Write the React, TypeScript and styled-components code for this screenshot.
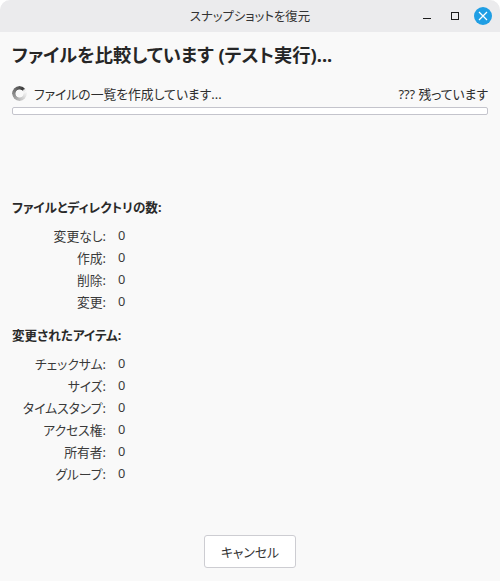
import React from "react";
import styled, { createGlobalStyle } from "styled-components";

const Global = createGlobalStyle`
  html, body { margin: 0; padding: 0; background: #ffffff; height: 100%; overflow: hidden; }
  #root { height: 100%; }
  * { box-sizing: border-box; }
`;

const Window = styled.div`
  width: 500px;
  height: 581px;
  display: flex;
  flex-direction: column;
  background: #f9f9f9;
  border-radius: 10px 10px 0 0;
  overflow: hidden;
  color: #2e2e2e;
  font-family: "Noto Sans", "Noto Sans CJK JP", sans-serif;
  font-feature-settings: "palt", "kern";
  font-size: 12.8px;
`;

const TitleBar = styled.header`
  position: relative;
  flex: 0 0 32px;
  height: 32px;
  display: flex;
  align-items: center;
  justify-content: center;
  background: #ebebed;
  font-size: 12.4px;
  color: #333333;
`;

const Controls = styled.div`
  position: absolute;
  right: 8px;
  top: 7px;
  display: flex;
  align-items: center;
  gap: 10px;
`;

const Control = styled.button<{ $close?: boolean }>`
  width: 18px;
  height: 18px;
  padding: 0;
  border: 0;
  border-radius: 50%;
  display: flex;
  align-items: center;
  justify-content: center;
  background: ${(p) => (p.$close ? "#1f9ee4" : "transparent")};
  color: ${(p) => (p.$close ? "#ffffff" : "#1c1c1c")};
`;

const Body = styled.main`
  flex: 1;
  display: flex;
  flex-direction: column;
  padding: 10px 12px 13px;
`;

const Heading = styled.h1`
  margin: 0;
  font-size: 18.3px;
  line-height: 26px;
  font-weight: 700;
  color: #262626;
`;

const StatusRow = styled.div`
  margin-top: 14px;
  height: 22px;
  display: flex;
  align-items: center;
  justify-content: space-between;
`;

const StatusLeft = styled.div`
  display: flex;
  align-items: center;
  gap: 7px;
`;

const Spinner = styled.div`
  width: 15px;
  height: 15px;
  border-radius: 50%;
  background: conic-gradient(from 70deg, rgba(60, 60, 60, 0) 0deg, rgba(110, 110, 110, 0.35) 90deg, #3a3a3a 330deg, rgba(60, 60, 60, 0.05) 345deg);
  -webkit-mask: radial-gradient(circle, transparent 3.6px, #000 4.4px);
  mask: radial-gradient(circle, transparent 3.6px, #000 4.4px);
`;

const Progress = styled.div`
  margin-top: 3px;
  height: 8px;
  border: 1px solid #c4c4cc;
  border-radius: 2px;
  background: #ffffff;
`;

const SectionTitle = styled.h2<{ $top: number }>`
  margin: ${(p) => p.$top}px 0 0;
  font-size: 12.6px;
  line-height: 20px;
  font-weight: 700;
  color: #2a2a2a;
`;

const StatsGrid = styled.dl`
  margin: 6px 0 0;
  display: grid;
  grid-template-columns: 94px auto;
  justify-content: start;
  column-gap: 12px;
  grid-auto-rows: 22px;
  align-items: center;
`;

const StatLabel = styled.dt`
  text-align: right;
  white-space: nowrap;
  color: #3a3a3a;
`;

const StatValue = styled.dd`
  margin: 0;
  color: #3a3a3a;
`;

const Footer = styled.footer`
  margin-top: auto;
  display: flex;
  justify-content: center;
`;

const CancelButton = styled.button`
  width: 92px;
  height: 33px;
  border: 1px solid #cdcdd2;
  border-radius: 3px;
  background: #ffffff;
  font: inherit;
  font-feature-settings: inherit;
  color: #333333;
`;

const groups = {
  counts: ["変更なし:", "作成:", "削除:", "変更:"],
  items: ["チェックサム:", "サイズ:", "タイムスタンプ:", "アクセス権:", "所有者:", "グループ:"],
};

const Stats = ({ labels }: { labels: string[] }) => (
  <StatsGrid>
    {labels.map((label) => (
      <React.Fragment key={label}>
        <StatLabel>{label}</StatLabel>
        <StatValue>0</StatValue>
      </React.Fragment>
    ))}
  </StatsGrid>
);

export default function App() {
  return (
    <>
      <Global />
      <Window>
        <TitleBar>
          スナップショットを復元
          <Controls>
            <Control aria-label="minimize">
              <svg width="10" height="10" viewBox="0 0 10 10">
                <path d="M1 7.5h8" stroke="currentColor" strokeWidth="1" fill="none" />
              </svg>
            </Control>
            <Control aria-label="maximize">
              <svg width="10" height="10" viewBox="0 0 10 10">
                <rect x="1.5" y="1.5" width="7" height="7" stroke="currentColor" strokeWidth="1" fill="none" />
              </svg>
            </Control>
            <Control $close aria-label="close">
              <svg width="10" height="10" viewBox="0 0 10 10">
                <path d="M1 1l8 8M9 1l-8 8" stroke="currentColor" strokeWidth="1.2" fill="none" />
              </svg>
            </Control>
          </Controls>
        </TitleBar>
        <Body>
          <Heading>ファイルを比較しています (テスト実行)...</Heading>
          <StatusRow>
            <StatusLeft>
              <Spinner />
              <span>ファイルの一覧を作成しています...</span>
            </StatusLeft>
            <span>??? 残っています</span>
          </StatusRow>
          <Progress />
          <SectionTitle $top={83}>ファイルとディレクトリの数:</SectionTitle>
          <Stats labels={groups.counts} />
          <SectionTitle $top={14}>変更されたアイテム:</SectionTitle>
          <Stats labels={groups.items} />
          <Footer>
            <CancelButton>キャンセル</CancelButton>
          </Footer>
        </Body>
      </Window>
    </>
  );
}
